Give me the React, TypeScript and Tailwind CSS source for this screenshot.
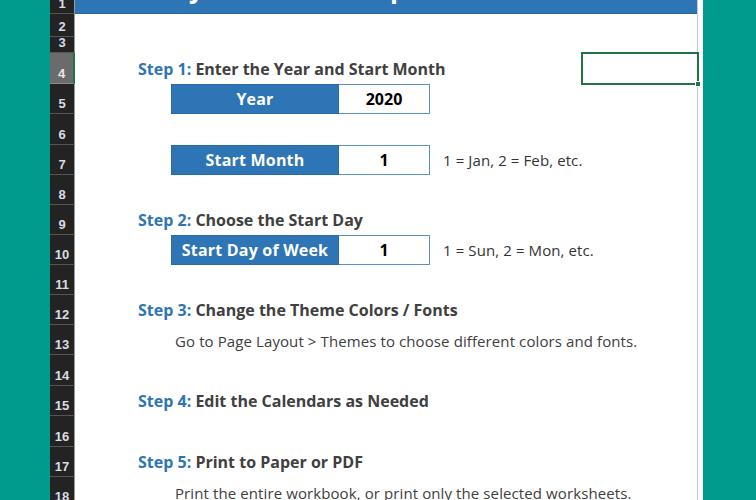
import React from "react";

const font = { fontFamily: "'Open Sans', Lato, sans-serif" };

type RowDef = { n: number; h: number };
const rows: RowDef[] = [
  { n: 1, h: 14 },
  { n: 2, h: 23 },
  { n: 3, h: 16 },
  { n: 4, h: 31 },
  { n: 5, h: 30 },
  { n: 6, h: 31 },
  { n: 7, h: 30 },
  { n: 8, h: 30 },
  { n: 9, h: 30 },
  { n: 10, h: 30 },
  { n: 11, h: 30 },
  { n: 12, h: 30 },
  { n: 13, h: 30 },
  { n: 14, h: 31 },
  { n: 15, h: 30 },
  { n: 16, h: 31 },
  { n: 17, h: 30 },
  { n: 18, h: 30 },
];

function Step({ num, text }: { num: number; text: string }) {
  return (
    <div className="pl-[63px] h-full flex items-end pb-[4px] text-[16px] font-bold leading-[22px] whitespace-nowrap" style={font}>
      <span className="text-[#2E75B6]">Step {num}:</span>
      <span className="text-[#404040]">&nbsp;{text}</span>
    </div>
  );
}

function InputRow({ label, value, note }: { label: string; value: string; note?: string }) {
  return (
    <div className="pl-[96px] h-full flex items-stretch" style={font}>
      <div className="w-[168px] bg-[#2E75B6] border border-[#2a6aa6] flex items-center justify-center text-white font-bold text-[16px] tracking-[0.2px]">
        {label}
      </div>
      <div className="w-[91px] bg-white border border-[#5b8fc9] border-l-0 flex items-center justify-center text-black font-bold text-[16px]">
        {value}
      </div>
      {note && (
        <div className="pl-[13px] flex items-center text-[15px] text-[#333333] whitespace-nowrap tracking-[0.1px]">{note}</div>
      )}
    </div>
  );
}

function Desc({ text }: { text: string }) {
  return (
    <div className="pl-[100px] h-full flex items-end pb-[3px] text-[15px] text-[#404040] leading-[22px] whitespace-nowrap tracking-[0.1px]" style={font}>
      {text}
    </div>
  );
}

function content(n: number) {
  switch (n) {
    case 1:
      return (
        <div className="h-full bg-[#2E75B6] border-b border-[#2565a0] overflow-hidden relative">
          <div className="absolute left-[47px] top-[-30px] text-white font-bold text-[26px] leading-[36px] whitespace-nowrap" style={font}>
            Yearly Calendar Template
          </div>
        </div>
      );
    case 4:
      return (
        <div className="h-full relative">
          <Step num={1} text="Enter the Year and Start Month" />
          <div className="absolute left-[506px] top-[-1px] w-[118px] h-[33px] border-2 border-[#217346]" />
          <div className="absolute left-[620px] top-[28px] w-[6px] h-[6px] bg-[#217346] border border-white" />
        </div>
      );
    case 5:
      return <InputRow label="Year" value="2020" />;
    case 7:
      return <InputRow label="Start Month" value="1" note="1 = Jan, 2 = Feb, etc." />;
    case 9:
      return <Step num={2} text="Choose the Start Day" />;
    case 10:
      return <InputRow label="Start Day of Week" value="1" note="1 = Sun, 2 = Mon, etc." />;
    case 12:
      return <Step num={3} text="Change the Theme Colors / Fonts" />;
    case 13:
      return <Desc text="Go to Page Layout > Themes to choose different colors and fonts." />;
    case 15:
      return <Step num={4} text="Edit the Calendars as Needed" />;
    case 17:
      return <Step num={5} text="Print to Paper or PDF" />;
    case 18:
      return <Desc text="Print the entire workbook, or print only the selected worksheets." />;
    default:
      return null;
  }
}

export default function App() {
  return (
    <div className="w-[756px] h-[500px] overflow-hidden flex bg-[#009B8D]">
      <div className="w-[50px] shrink-0 bg-[#009B8D]" />
      <div className="w-[647px] shrink-0 flex flex-col">
        {rows.map((r) => {
          const sel = r.n === 4;
          return (
            <div key={r.n} className="flex shrink-0" style={{ height: r.h }}>
              <div
                className={
                  "w-[25px] shrink-0 flex items-end justify-center text-[13px] font-bold leading-[15px] border-b " +
                  (sel
                    ? "bg-[#6b6b6b] text-[#e8e8e8] border-[#8a8a8a] border-r-2 border-r-[#217346]"
                    : "bg-[#232323] text-[#d8dce4] border-[#555555] border-r border-r-[#9a9a9a]")
                }
                style={{ fontFamily: "'Liberation Sans', Arial, sans-serif" }}
              >
                <span className="mb-[2px]">{r.n}</span>
              </div>
              <div className="w-[622px] shrink-0 bg-white">{content(r.n)}</div>
            </div>
          );
        })}
      </div>
      <div className="w-px shrink-0 bg-[#c8c8c8]" />
      <div className="w-[5px] shrink-0 bg-white" />
      <div className="flex-1 bg-[#009B8D]" />
    </div>
  );
}
